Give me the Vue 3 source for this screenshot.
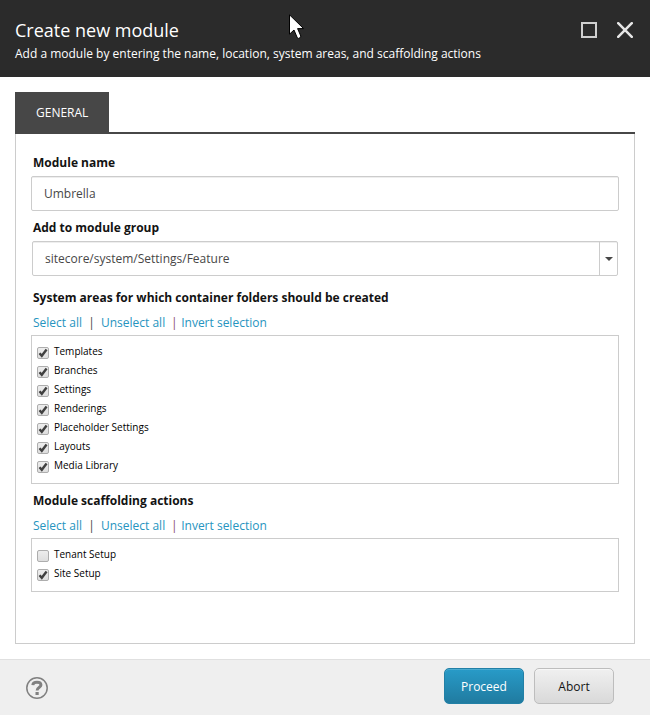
<script setup>
import { ref, reactive } from 'vue'

const moduleName = ref('Umbrella')
const moduleGroup = ref('sitecore/system/Settings/Feature')

const sections = reactive([
  {
    id: 'areas',
    title: 'System areas for which container folders should be created',
    items: [
      { label: 'Templates', checked: true },
      { label: 'Branches', checked: true },
      { label: 'Settings', checked: true },
      { label: 'Renderings', checked: true },
      { label: 'Placeholder Settings', checked: true },
      { label: 'Layouts', checked: true },
      { label: 'Media Library', checked: true }
    ]
  },
  {
    id: 'actions',
    title: 'Module scaffolding actions',
    items: [
      { label: 'Tenant Setup', checked: false },
      { label: 'Site Setup', checked: true }
    ]
  }
])

function setAll(section, value) {
  section.items.forEach((item) => { item.checked = value })
}
function invert(section) {
  section.items.forEach((item) => { item.checked = !item.checked })
}
</script>

<template>
  <div class="dialog">
    <header class="header">
      <div class="heading">
        <h1>Create new module</h1>
        <p>Add a module by entering the name, location, system areas, and scaffolding actions</p>
      </div>
      <div class="window-actions">
        <button type="button" aria-label="Maximize">
          <svg width="16" height="16" viewBox="0 0 16 16"><rect x="1" y="1" width="14" height="14" fill="none" stroke="#d0d0d0" stroke-width="2" /></svg>
        </button>
        <button type="button" aria-label="Close">
          <svg width="16" height="16" viewBox="0 0 16 16"><path d="M1.2 1.2L14.8 14.8M14.8 1.2L1.2 14.8" stroke="#e6e6e6" stroke-width="2.5" stroke-linecap="round" /></svg>
        </button>
      </div>
      <svg class="pointer" width="17" height="26" viewBox="0 0 17 26" aria-hidden="true">
        <path d="M.5 .8V20.2L5 16L8.2 23.6L9.4 24.4L11.6 23.4L11.8 22L8.6 14.6H14.6Z" fill="#fff" stroke="#000" />
      </svg>
    </header>

    <main class="content">
      <nav class="tabs"><button type="button" class="tab">GENERAL</button></nav>
      <div class="panel">
        <div class="field">
          <label for="module-name">Module name</label>
          <input id="module-name" v-model="moduleName" class="text-input" type="text">
        </div>
        <div class="field">
          <label for="module-group">Add to module group</label>
          <div class="combo">
            <select id="module-group" v-model="moduleGroup">
              <option>sitecore/system/Settings/Feature</option>
            </select>
            <span class="combo-arrow">
              <svg width="8" height="4" viewBox="0 0 8 4"><path d="M0 0H8L4 4Z" fill="#474747" /></svg>
            </span>
          </div>
        </div>

        <section v-for="section in sections" :key="section.id" class="group" :aria-labelledby="section.id">
          <h2 :id="section.id">{{ section.title }}</h2>
          <div class="links">
            <a href="#" @click.prevent="setAll(section, true)">Select all</a>
            <span class="bar">|</span>
            <a href="#" @click.prevent="setAll(section, false)">Unselect all</a>
            <span class="bar">|</span>
            <a href="#" @click.prevent="invert(section)">Invert selection</a>
          </div>
          <div class="checklist">
            <label v-for="item in section.items" :key="item.label" class="check">
              <span class="tick">
                <input v-model="item.checked" type="checkbox">
                <svg v-if="item.checked" width="12" height="12" viewBox="0 0 12 12"><path d="M2.5 6.200L4.800 8.800L9.600 2.600" fill="none" stroke="#404040" stroke-width="2.4" /></svg>
              </span>
              <span class="check-text">{{ item.label }}</span>
            </label>
          </div>
        </section>
      </div>
    </main>

    <footer class="footer">
      <button type="button" class="help" aria-label="Help">
        <svg width="22" height="22" viewBox="0 0 22 22">
          <circle cx="11" cy="11" r="10.2" fill="none" stroke="#808080" stroke-width="1.5" />
          <path d="M6.8 8.1C7 5.9 8.7 5.3 11 5.3C13.5 5.3 15 6.2 15 8.1C15 10.3 11.1 10.2 11.1 13.5" fill="none" stroke="#808080" stroke-width="2.9" />
          <rect x="9.5" y="15" width="3.2" height="3" fill="#808080" />
        </svg>
      </button>
      <div class="footer-actions">
        <button type="button" class="btn primary">Proceed</button>
        <button type="button" class="btn">Abort</button>
      </div>
    </footer>
  </div>
</template>

<style>
body {
  margin: 0;
}
</style>

<style scoped>
* {
  box-sizing: border-box;
}
.dialog {
  display: flex;
  flex-direction: column;
  min-height: 100vh;
  background: #fff;
  color: #131313;
  font: 12px/18px "Open Sans", "Noto Sans", sans-serif;
}
button {
  font: inherit;
  border: 0;
  padding: 0;
  background: none;
  cursor: pointer;
}
.header {
  position: relative;
  display: flex;
  justify-content: space-between;
  align-items: flex-start;
  min-height: 77px;
  padding: 16px 17px 14px 15px;
  background: #2b2b2b;
  color: #fff;
}
h1 {
  margin: 0 0 1px;
  font-size: 18px;
  line-height: 28px;
  font-weight: 400;
}
p {
  margin: 0;
}
.window-actions {
  display: flex;
  gap: 20px;
  padding-top: 6px;
}
.window-actions svg,
.help svg {
  display: block;
}
.pointer {
  position: absolute;
  left: 289px;
  top: 14px;
  pointer-events: none;
}
.content {
  flex: 1;
  display: flex;
  flex-direction: column;
  padding: 15px;
}
.tabs {
  display: flex;
  border-bottom: 2px solid #474747;
}
.tab {
  height: 40px;
  padding: 2px 21px 0;
  background: #474747;
  color: #fff;
}
.panel {
  flex: 1;
  padding: 20px 15px;
  border: 1px solid #ccc;
  border-top: 0;
}
.field {
  display: flex;
  flex-direction: column;
  gap: 4px;
  margin-bottom: 8px;
}
.field > label,
h2 {
  margin: 0;
  padding-left: 2px;
  font-size: 12px;
  line-height: 18px;
  font-weight: 700;
}
.text-input,
.combo {
  width: 100%;
  height: 35px;
  border: 1px solid #ccc;
  border-radius: 2px;
  background: #fff;
  box-shadow: inset 0 1px #eee;
}
.text-input {
  padding: 0 12px;
  color: #474747;
  font: inherit;
}
.combo {
  display: flex;
  width: auto;
  margin: 0 1px;
}
.combo select {
  flex: 1;
  min-width: 0;
  padding: 0 12px;
  border: 0;
  appearance: none;
  background: none;
  color: #474747;
  font: inherit;
}
.combo-arrow {
  display: flex;
  align-items: center;
  justify-content: center;
  width: 18px;
  border-left: 1px solid #ccc;
  pointer-events: none;
}
.group {
  padding-top: 5px;
  margin-bottom: 3px;
}
.links {
  display: flex;
  padding: 7px 2px 3px;
}
.links a {
  color: #2694c0;
  text-decoration: none;
}
.bar {
  width: 19px;
  text-align: center;
  color: #474747;
}
.bar:nth-of-type(2) {
  width: 16px;
  padding-left: 2px;
  color: #8a4a72;
}
.checklist {
  padding: 6px 5px 8px;
  border: 1px solid #ccc;
}
.check {
  display: flex;
  gap: 5px;
  height: 19px;
}
.tick {
  display: grid;
  width: 12px;
  height: 12px;
  margin-top: 5px;
}
.tick > * {
  grid-area: 1 / 1;
}
.tick svg {
  pointer-events: none;
}
.tick input {
  appearance: none;
  width: 12px;
  height: 12px;
  margin: 0;
  border: 1px solid #adadad;
  border-radius: 2px;
  background: linear-gradient(#ededed, #dedede);
}
.check-text {
  color: #000;
  font-size: 10px;
}
.footer {
  display: flex;
  align-items: flex-start;
  justify-content: space-between;
  min-height: 56px;
  padding: 8px 36px 8px 26px;
  border-top: 1px solid #e0e0e0;
  background: #efefef;
}
.help {
  margin-top: 9px;
}
.footer-actions {
  display: flex;
  gap: 10px;
}
.btn {
  width: 80px;
  height: 36px;
  padding-top: 2px;
  border: 1px solid #bdbdbd;
  border-radius: 5px;
  background: linear-gradient(#f0f0f0, #d9d9d9);
  box-shadow: inset 0 1px #f7f7f7;
  color: #131313;
}
.primary {
  border-color: #2280a6;
  background: linear-gradient(#289bc8, #207ba0);
  box-shadow: inset 0 1px #4aabd0;
  color: #fff;
}
</style>
